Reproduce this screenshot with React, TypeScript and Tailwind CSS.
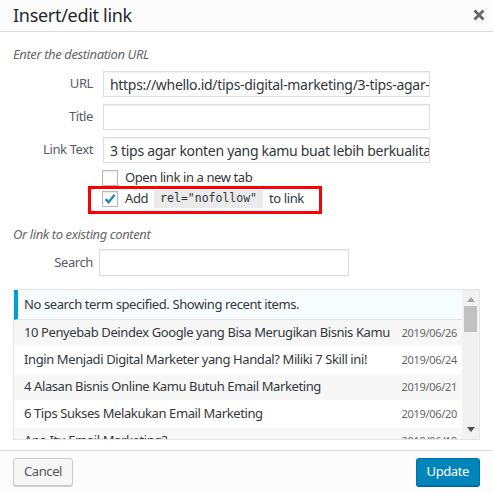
import React from "react";

const results = [
  { title: "10 Penyebab Deindex Google yang Bisa Merugikan Bisnis Kamu", date: "2019/06/26" },
  { title: "Ingin Menjadi Digital Marketer yang Handal? Miliki 7 Skill ini!", date: "2019/06/24" },
  { title: "4 Alasan Bisnis Online Kamu Butuh Email Marketing", date: "2019/06/21" },
  { title: "6 Tips Sukses Melakukan Email Marketing", date: "2019/06/20" },
  { title: "Apa Itu Email Marketing?", date: "2019/06/19" },
];

function Field({ label, value }: { label: string; value?: string }) {
  return (
    <div className="flex items-center h-[26px]">
      <label className="w-[82px] text-right pr-[2px] text-[#555d66]">{label}</label>
      <div className="ml-[8px] w-[327px] h-[26px] border border-[#ddd] shadow-[inset_0_1px_2px_rgba(0,0,0,0.07)] pl-[6px] flex items-center text-[#32373c] text-[14px] tracking-[-0.3px] whitespace-nowrap overflow-hidden">
        {value}
      </div>
    </div>
  );
}

function Checkbox({ checked }: { checked?: boolean }) {
  return (
    <span className="w-[16px] h-[16px] border border-[#b4b9be] bg-white shadow-[inset_0_1px_2px_rgba(0,0,0,0.1)] flex items-center justify-center shrink-0">
      {checked && (
        <svg width="14" height="14" viewBox="0 0 14 14">
          <path d="M2.5 7.2 L5.6 10.2 L11.6 2.8" fill="none" stroke="#1e8cbe" strokeWidth="2.3" />
        </svg>
      )}
    </span>
  );
}

export default function App() {
  return (
    <div className="w-[493px] h-[493px] bg-white flex flex-col font-['Noto_Sans',sans-serif] text-[13px] tracking-[-0.4px] text-[#444] overflow-hidden">
      {/* title bar */}
      <div className="h-[32px] shrink-0 bg-[#fcfcfc] border-b border-[#ddd] flex items-center justify-between pl-[13px] pr-[8px]">
        <h1 className="text-[18px] tracking-[-0.3px] text-[#23282d] leading-none -mt-[2px]">Insert/edit link</h1>
        <svg width="12" height="12" viewBox="0 0 12 12" className="-mt-[2px]">
          <path d="M1.5 1.5 L10.5 10.5 M10.5 1.5 L1.5 10.5" stroke="#666" strokeWidth="2.8" />
        </svg>
      </div>

      {/* link fields */}
      <div className="flex-1 flex flex-col px-[13px]">
        <p className="mt-[13px] h-[18px] leading-[18px] italic text-[#666]">Enter the destination URL</p>
        <div className="mt-[8px] flex flex-col gap-[7px]">
          <Field label="URL" value="https://whello.id/tips-digital-marketing/3-tips-agar-konten-yang-kamu-buat-lebih-berkualitas/" />
          <Field label="Title" />
          <Field label="Link Text" value="3 tips agar konten yang kamu buat lebih berkualitas" />
        </div>

        <div className="mt-[5px] ml-[89px] h-[20px] flex items-center gap-[7px] text-[#32373c]">
          <Checkbox />
          <span>Open link in a new tab</span>
        </div>
        <div className="relative ml-[89px] h-[22px] flex items-center gap-[7px] text-[#32373c]">
          <Checkbox checked />
          <span className="flex items-center gap-[6px]">
            Add
            <code className="bg-[#eaeaea] px-[6px] h-[18px] flex items-center font-['DejaVu_Sans_Mono',monospace] text-[11.5px] tracking-normal text-[#32373c]">
              rel="nofollow"
            </code>
            to link
          </span>
          <span className="absolute left-[-14px] top-[-2px] w-[234px] h-[28px] border-[3px] border-[#f00]" />
        </div>

        <p className="mt-[15px] h-[18px] leading-[18px] italic text-[#666]">Or link to existing content</p>
        <div className="mt-[6px] flex items-center h-[27px]">
          <label className="w-[82px] text-right pr-[2px] text-[#555d66]">Search</label>
          <div className="ml-[4px] w-[250px] h-[27px] border border-[#ddd] shadow-[inset_0_1px_2px_rgba(0,0,0,0.07)]" />
        </div>

        {/* recent items */}
        <div className="mt-[13px] h-[151px] border border-[#e5e5e5] flex overflow-hidden">
          <div className="flex-1 flex flex-col overflow-hidden">
            <div className="h-[30px] shrink-0 bg-[#f7fcfe] border-l-[4px] border-[#00a0d2] border-b border-b-[#e5e5e5] pl-[6px] flex items-center text-[#32373c]">
              No search term specified. Showing recent items.
            </div>
            {results.map((r, i) => (
              <div
                key={r.title}
                className={`h-[27px] shrink-0 flex items-center justify-between pl-[10px] pr-[5px] border-b border-[#fff] ${i % 2 === 0 ? "bg-[#f7f7f7]" : "bg-white"}`}
              >
                <span className="text-[#32373c] whitespace-nowrap">{r.title}</span>
                <span className="text-[11px] tracking-[-0.3px] text-[#666] shrink-0">{r.date}</span>
              </div>
            ))}
          </div>
          {/* scrollbar */}
          <div className="w-[17px] bg-[#f1f1f1] flex flex-col items-center">
            <svg width="8" height="5" viewBox="0 0 8 5" className="mt-[7px]">
              <path d="M0 5 L4 0 L8 5 Z" fill="#a3a3a3" />
            </svg>
            <div className="mt-[4px] w-[13px] h-[26px] bg-[#c1c1c1]" />
            <div className="flex-1" />
            <svg width="8" height="5" viewBox="0 0 8 5" className="mb-[7px]">
              <path d="M0 0 L8 0 L4 5 Z" fill="#505050" />
            </svg>
          </div>
        </div>
      </div>

      {/* actions */}
      <div className="h-[43px] shrink-0 bg-[#fcfcfc] border-t border-[#ddd] flex items-center justify-between px-[13px]">
        <button className="h-[28px] px-[10px] bg-[#f7f7f7] border border-[#ccc] rounded-[3px] shadow-[0_1px_0_#ccc] text-[#555] text-[13px]">
          Cancel
        </button>
        <button className="h-[28px] px-[10px] bg-[#0085ba] border border-[#0073aa] rounded-[3px] shadow-[0_1px_0_#006799] text-white text-[13px]">
          Update
        </button>
      </div>
    </div>
  );
}
